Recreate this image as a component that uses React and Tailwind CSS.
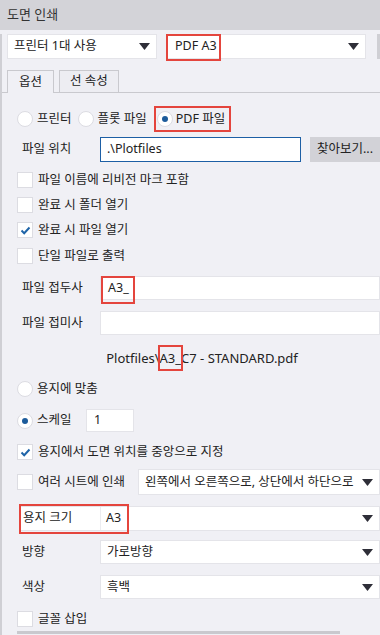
import React from "react";

function Arrow() {
  return (
    <svg width="11" height="7" viewBox="0 0 11 7" className="shrink-0">
      <polygon points="0,0 11,0 5.5,7" fill="#2e2e38" />
    </svg>
  );
}

function RedBox({ className }) {
  return <div className={`absolute border-2 border-[#e4453d] pointer-events-none ${className}`} />;
}

function Radio({ checked }) {
  return (
    <span className="w-4 h-4 rounded-full bg-white border border-[#dcdce2] flex items-center justify-center shrink-0">
      {checked && <span className="w-[6px] h-[6px] rounded-full bg-[#1c5b9b]" />}
    </span>
  );
}

function Checkbox({ checked }) {
  return (
    <span className="w-4 h-4 bg-white border border-[#dcdce2] flex items-center justify-center shrink-0">
      {checked && (
        <svg width="11" height="9" viewBox="0 0 11 9">
          <polyline points="1.5,4.5 4.2,7.2 9.5,1.5" fill="none" stroke="#1f64a8" strokeWidth="2" />
        </svg>
      )}
    </span>
  );
}

function CheckRow({ checked, label, className = "" }) {
  return (
    <div className={`flex items-center h-4 pl-[15px] ${className}`}>
      <Checkbox checked={checked} />
      <span className="ml-[5px]">{label}</span>
    </div>
  );
}

function SelectBox({ value, className = "" }) {
  return (
    <div className={`flex items-center justify-between bg-white border border-[#e4e4e9] pl-[6px] pr-[6px] ${className}`}>
      <span className="whitespace-nowrap overflow-hidden">{value}</span>
      <Arrow />
    </div>
  );
}

function LabelRow({ label, children, className = "" }) {
  return (
    <div className={`flex items-center ${className}`}>
      <span className="w-[98px] shrink-0 pl-[20px] whitespace-nowrap">{label}</span>
      {children}
    </div>
  );
}

export default function App() {
  return (
    <div className="w-[380px] h-[635px] overflow-hidden bg-[#f0f0f5] text-[12.5px] text-[#222] font-['Noto_Sans','Noto_Sans_CJK_KR',sans-serif]">
      <div className="h-[30px] bg-[#d3d3d8] flex items-center pl-[7px] text-[13px] text-[#333]">도면 인쇄</div>

      <div className="border-l-2 border-[#cfcfd4] h-[605px]">
        <div className="flex items-center h-[25px] mt-[4px]">
          <SelectBox value="프린터 1대 사용" className="ml-[5px] w-[150px] h-[25px] shrink-0" />
          <div className="relative ml-[9px] w-[200px] shrink-0">
            <SelectBox value="PDF A3" className="h-[25px] pl-[8px]" />
            <RedBox className="left-0 top-0 w-[55px] h-[27px]" />
          </div>
          <div className="ml-[11px] w-[10px] h-[25px] bg-[#cfcfd4] shrink-0" />
        </div>

        <div className="flex items-end h-[23px] mt-[11px] border-b border-[#c9c9ce]">
          <div className="ml-[5px] w-[47px] h-[23px] -mb-px bg-[#f0f0f5] border border-b-0 border-[#c9c9ce] flex items-center justify-center">
            옵션
          </div>
          <div className="ml-[5px] w-[60px] h-[22px] bg-[#ededf2] border border-b-0 border-[#c9c9ce] flex items-center justify-center">
            선 속성
          </div>
        </div>

        <div className="flex items-center h-5 mt-[16px] pl-[15px]">
          <Radio />
          <span className="ml-[4px]">프린터</span>
          <span className="ml-[6px]"><Radio /></span>
          <span className="ml-[4px]">플롯 파일</span>
          <div className="relative ml-[7px] flex items-center h-[26px] w-[77px] pl-[3px]">
            <Radio checked />
            <span className="ml-[3px] whitespace-nowrap">PDF 파일</span>
            <RedBox className="left-0 top-0 w-[77px] h-[26px]" />
          </div>
        </div>

        <LabelRow label="파일 위치" className="h-[25px] mt-[8px]">
          <div className="w-[201px] h-[25px] bg-white border border-[#1d5fa5] flex items-center pl-[6px]">.\Plotfiles</div>
          <div className="ml-[9px] w-[70px] h-[25px] bg-[#d2d2d7] flex items-center justify-center whitespace-nowrap">찾아보기...</div>
        </LabelRow>

        <CheckRow label="파일 이름에 리비전 마크 포함" className="mt-[10px]" />
        <CheckRow label="완료 시 폴더 열기" className="mt-[9px]" />
        <CheckRow checked label="완료 시 파일 열기" className="mt-[9px]" />
        <CheckRow label="단일 파일로 출력" className="mt-[10px]" />

        <LabelRow label="파일 접두사" className="h-[24px] mt-[12px]">
          <div className="relative flex-1 h-[24px] bg-white border border-[#e4e4e9] flex items-center pl-[7px]">
            A3_
            <RedBox className="left-0 -top-px w-[34px] h-[28px]" />
          </div>
        </LabelRow>

        <LabelRow label="파일 접미사" className="h-[24px] mt-[11px]">
          <div className="flex-1 h-[24px] bg-white border border-[#e4e4e9]" />
        </LabelRow>

        <div className="h-[20px] mt-[14px] pl-[22px] flex items-center justify-center text-[13px]">
          <span>Plotfiles\</span>
          <span className="relative">
            A3_
            <RedBox className="-left-[2px] -top-[4px] w-[25px] h-[26px]" />
          </span>
          <span>C7 - STANDARD.pdf</span>
        </div>

        <div className="flex items-center h-4 mt-[12px] pl-[15px]">
          <Radio />
          <span className="ml-[4px]">용지에 맞춤</span>
        </div>

        <div className="flex items-center h-[23px] mt-[12px] pl-[15px]">
          <Radio checked />
          <span className="ml-[4px] w-[45px]">스케일</span>
          <div className="ml-[4px] w-[48px] h-[23px] bg-white border border-[#e4e4e9] flex items-center pl-[7px]">1</div>
        </div>

        <CheckRow checked label="용지에서 도면 위치를 중앙으로 지정" className="mt-[12px]" />

        <div className="flex items-center h-[26px] mt-[9px] pl-[15px]">
          <Checkbox />
          <span className="ml-[5px] w-[100px] whitespace-nowrap">여러 시트에 인쇄</span>
          <SelectBox value="왼쪽에서 오른쪽으로, 상단에서 하단으로" className="flex-1 h-[26px] pr-[4px]" />
        </div>

        <div className="relative flex items-center h-[25px] mt-[11px] ml-[18px] bg-white border border-[#e4e4e9]">
          <span className="w-[80px] pl-[2px] h-full flex items-center border-r border-[#ececf0]">용지 크기</span>
          <span className="flex-1 pl-[5px]">A3</span>
          <span className="pr-[6px] flex items-center"><Arrow /></span>
          <RedBox className="-left-[2px] -top-[3px] w-[110px] h-[30px]" />
        </div>

        <LabelRow label="방향" className="h-[24px] mt-[9px]">
          <SelectBox value="가로방향" className="flex-1 h-[24px]" />
        </LabelRow>

        <LabelRow label="색상" className="h-[24px] mt-[11px]">
          <SelectBox value="흑백" className="flex-1 h-[24px]" />
        </LabelRow>

        <CheckRow label="글꼴 삽입" className="mt-[12px]" />

        <div className="mt-[4px] ml-[15px] w-[323px] h-[3px] bg-[#c9c9ce]" />
      </div>
    </div>
  );
}
